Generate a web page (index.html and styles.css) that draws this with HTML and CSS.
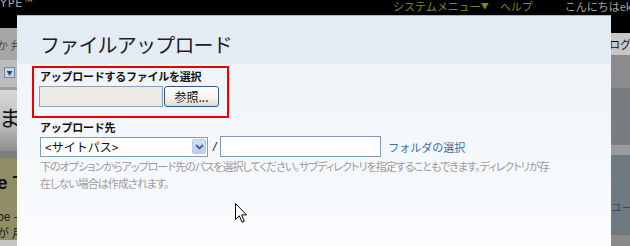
FILE: index.html
```html
<!DOCTYPE html>
<html lang="ja">
<head>
<meta charset="utf-8">
<title>ファイルアップロード</title>
<link rel="stylesheet" href="styles.css">
</head>
<body>
<div class="page">
  <header class="topbar">
    <span class="brand">YPE™</span>
    <span class="sysmenu">システムメニュー<span class="tri">▼</span></span>
    <span class="sep"></span>
    <span class="help">ヘルプ</span>
    <span class="hello">こんにちはek</span>
  </header>

  <aside class="left-strip">
    <div class="ls-black"></div>
    <div class="ls-a"><span>か 弁</span></div>
    <div class="ls-b"><span class="mini-drop">▼</span></div>
    <div class="ls-line"></div>
    <div class="ls-c"><span>ま</span></div>
    <div class="ls-d"></div>
    <div class="ls-e">
      <span class="ls-big">e T</span>
      <span class="ls-small1">be -</span>
      <span class="ls-small2">が 月</span>
    </div>
    <div class="ls-f"></div>
  </aside>

  <main class="modal">
    <div class="modal-head">
      <h1 class="modal-title">ファイルアップロード</h1>
    </div>
    <section class="file-box">
      <div class="field-label">アップロードするファイルを選択</div>
      <div class="file-row">
        <input class="file-path" type="text" value="">
        <button class="browse" type="button">参照...</button>
      </div>
    </section>
    <section class="dest">
      <div class="field-label">アップロード先</div>
      <div class="dest-row">
        <div class="select">
          <span class="select-text">&lt;サイトパス&gt;</span>
          <span class="select-btn">
            <svg width="9" height="6" viewBox="0 0 9 6"><path d="M1 1 L4.5 4.5 L8 1" fill="none" stroke="#4d6185" stroke-width="1.8"/></svg>
          </span>
        </div>
        <span class="slash">/</span>
        <input class="subdir" type="text" value="">
        <a class="folder-link" href="#">フォルダの選択</a>
      </div>
      <p class="hint">下のオプションからアップロード先のパスを選択してください。サブディレクトリを指定することもできます。ディレクトリが存<br>在しない場合は作成されます。</p>
    </section>
  </main>

  <aside class="right-strip">
    <div class="rs-black"></div>
    <div class="rs-tab"><span>ログ</span></div>
    <div class="rs-a"></div>
    <div class="rs-b"></div>
    <div class="rs-c"></div>
    <div class="rs-d"><span>ユー</span></div>
    <div class="rs-e"></div>
  </aside>
</div>

<svg class="cursor" width="13" height="21" viewBox="0 0 13 21">
  <path d="M0.5 0.5 L0.5 16.5 L4.3 12.8 L7 19.2 L9.3 18.2 L6.6 11.9 L11.5 11.9 Z" fill="#fff" stroke="#000" stroke-width="1" stroke-linejoin="miter"/>
</svg>
</body>
</html>
```

FILE: styles.css
```css
html, body {
  margin: 0;
  padding: 0;
}
body {
  width: 630px;
  height: 246px;
  overflow: hidden;
  background: #000;
  position: relative;
  font-family: "Noto Sans CJK JP", "Liberation Sans", sans-serif;
}
.page {
  display: grid;
  grid-template-columns: 17px 594px 19px;
  grid-template-rows: 15px 231px;
  width: 630px;
  height: 246px;
}

/* top bar */
.topbar {
  grid-column: 1 / -1;
  display: flex;
  align-items: flex-start;
  background: #000;
  font-size: 11px;
  line-height: 12px;
  white-space: nowrap;
  overflow: hidden;
}
.brand {
  flex: 0 0 393px;
  font-family: "DejaVu Sans", sans-serif;
  color: #a8a8a8;
  letter-spacing: 1px;
  margin-top: -2px;
}
.sysmenu {
  color: #85851f;
}
.tri {
  font-size: 8px;
  vertical-align: 2px;
}
.sep {
  width: 1px;
  height: 13px;
  background: #555;
  margin: 0 7px 0 4px;
}
.help {
  color: #85851f;
}
.hello {
  margin-left: 32px;
  color: #a0a0a0;
}

/* left strip */
.left-strip {
  display: flex;
  flex-direction: column;
  overflow: hidden;
  font-size: 11px;
  white-space: nowrap;
}
.ls-black { height: 13px; background: #000; }
.ls-a {
  height: 32px;
  background: #a6a6a6;
  color: #4c4a3c;
  line-height: 12px;
  padding-top: 11px;
  box-sizing: border-box;
  margin-left: -3px;
}
.ls-b {
  height: 27px;
  background: #bcbcbc;
  padding: 7px 0 0 4px;
  box-sizing: border-box;
}
.mini-drop {
  display: block;
  width: 9px;
  height: 9px;
  border: 1px solid #7a8a9a;
  background: #c9d5e2;
  color: #2b4a78;
  font-size: 6px;
  line-height: 9px;
  text-align: center;
}
.ls-line { height: 3px; background: #9c9c9c; }
.ls-c {
  height: 61px;
  background: linear-gradient(#d8d8d8, #b9b9b9 60%, #8e8e8e);
  font-size: 22px;
  line-height: 26px;
  color: #111;
  padding-top: 13px;
  box-sizing: border-box;
  margin-left: -1px;
}
.ls-d { height: 7px; background: #7d7d7d; }
.ls-e {
  flex: 1;
  background: #8f8e66;
  display: flex;
  flex-direction: column;
  margin-left: -3px;
  color: #111;
}
.ls-big {
  font-family: "Liberation Sans", sans-serif;
  font-weight: bold;
  font-size: 19px;
  line-height: 22px;
  margin-top: 14px;
}
.ls-small1 {
  font-family: "Liberation Sans", sans-serif;
  font-size: 12px;
  line-height: 14px;
  margin-top: 16px;
  color: #222;
}
.ls-small2 {
  font-size: 12px;
  line-height: 14px;
  margin-top: 2px;
  color: #222;
}
.ls-f { height: 6px; background: #c4c4c4; }

/* modal */
.modal {
  border-top: 1px solid #b4b4b4;
  background: linear-gradient(#ecf2f8, #f6f9fc 70%, #fbfcfe);
  padding: 0 15px;
  overflow: hidden;
}
.modal-head {
  height: 48px;
  margin: 0 -15px;
  padding: 0 0 0 23px;
  background: #e3ebf4;
  box-sizing: border-box;
}
.modal-title {
  margin: 0;
  padding-top: 16px;
  font-size: 20px;
  line-height: 26px;
  font-weight: 400;
  color: #1e1e1e;
  letter-spacing: -0.8px;
}
.field-label {
  font-size: 11px;
  line-height: 14px;
  font-weight: 700;
  color: #111;
  letter-spacing: -0.25px;
}
.file-box {
  margin-top: 2px;
  width: 197px;
  box-sizing: border-box;
  border: 2px solid #ee0000;
  padding: 1px 0 9px 6px;
}
.file-row {
  display: flex;
  margin-top: 3px;
  margin-left: -1px;
}
.file-path {
  width: 124px;
  height: 21px;
  box-sizing: border-box;
  border: 1px solid #8da2ba;
  background: #ebeae5;
  margin: 0;
  padding: 0;
}
.browse {
  width: 55px;
  height: 21px;
  margin: 0 0 0 1px;
  padding: 0;
  box-sizing: border-box;
  border: 1px solid #2d5a8c;
  border-radius: 3px;
  background: linear-gradient(#ffffff, #f3f2ee 60%, #dedbd0);
  font-family: "Noto Sans CJK JP", sans-serif;
  font-size: 12px;
  line-height: 17px;
  color: #111;
}
.dest {
  padding-left: 8px;
  margin-top: 2px;
}
.dest-row {
  display: flex;
  align-items: center;
  margin-top: 2px;
}
.select {
  width: 168px;
  height: 20px;
  box-sizing: border-box;
  border: 1px solid #7f9db9;
  background: #fff;
  display: flex;
  align-items: center;
  justify-content: space-between;
  padding: 0 1px 0 4px;
}
.select-text {
  font-size: 12px;
  line-height: 16px;
  color: #111;
}
.select-btn {
  width: 14px;
  height: 15px;
  box-sizing: border-box;
  border: 1px solid #b3c8f2;
  border-radius: 2px;
  background: linear-gradient(#d3e0fc, #b8cdf8);
  display: flex;
  align-items: center;
  justify-content: center;
}
.slash {
  font-family: "Liberation Sans", sans-serif;
  font-size: 12px;
  font-style: italic;
  color: #111;
  margin: 0 4px 0 5px;
}
.subdir {
  width: 161px;
  height: 21px;
  box-sizing: border-box;
  border: 1px solid #7f9db9;
  background: #fff;
  margin: 0;
  padding: 0;
}
.folder-link {
  margin-left: 7px;
  font-size: 11px;
  line-height: 14px;
  color: #326ca6;
  text-decoration: none;
}
.hint {
  margin: 1px 0 0;
  font-size: 11px;
  line-height: 17px;
  color: #9a9a9a;
  white-space: nowrap;
  font-feature-settings: "palt";
  letter-spacing: -0.95px;
}

/* right strip */
.right-strip {
  display: flex;
  flex-direction: column;
  overflow: hidden;
  white-space: nowrap;
  font-size: 11px;
}
.rs-black { height: 18px; background: #000; }
.rs-tab {
  height: 22px;
  background: #c6c6c6;
  color: #111;
  line-height: 14px;
  padding-top: 4px;
  box-sizing: border-box;
  margin-left: -2px;
}
.rs-a { height: 33px; background: #8b8b8b; }
.rs-b { height: 57px; background: #7a7d7f; }
.rs-c { height: 10px; background: #9c9c9c; }
.rs-d {
  height: 80px;
  background: #6f7a80;
  color: #2f4a6e;
  line-height: 14px;
  padding-top: 45px;
  box-sizing: border-box;
}
.rs-e { flex: 1; background: #8a8a8a; }

.cursor {
  position: absolute;
  left: 235px;
  top: 203px;
}
```
